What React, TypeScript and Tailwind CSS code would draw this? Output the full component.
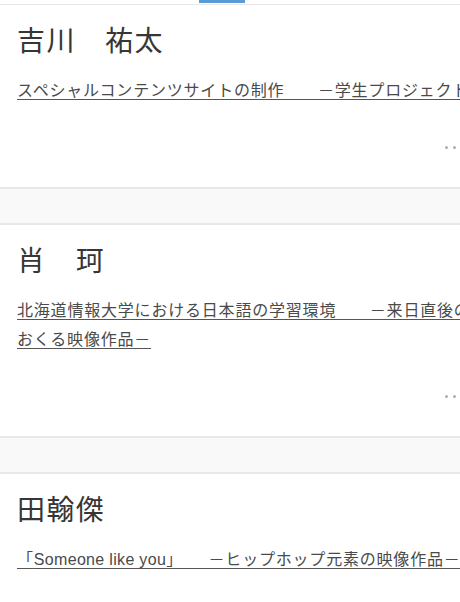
import type { ReactNode } from "react";

const works: { name: string; lines: ReactNode[] }[] = [
  {
    name: "吉川　祐太",
    lines: ["スペシャルコンテンツサイトの制作　　－学生プロジェクト－"],
  },
  {
    name: "肖　珂",
    lines: [
      "北海道情報大学における日本語の学習環境　　－来日直後の人に",
      "おくる映像作品－",
    ],
  },
  {
    name: "田翰傑",
    lines: [
      <>
        「<span className="tracking-[0.02em]">Someone like you</span>」　　－ヒップホップ元素の映像作品－
      </>,
    ],
  },
];

function MoreDots() {
  return (
    <div className="flex justify-end gap-[5px] pr-[46px] mt-[41px]">
      <span className="block w-[3px] h-[3px] rounded-full bg-[#aeaeae]" />
      <span className="block w-[3px] h-[3px] rounded-full bg-[#aeaeae]" />
      <span className="block w-[3px] h-[3px] rounded-full bg-[#aeaeae]" />
    </div>
  );
}

function WorkCard({ name, lines, last }: { name: string; lines: ReactNode[]; last?: boolean }) {
  return (
    <section className="pt-[17px] pb-[38px] pl-[17px]">
      <h2 className="h-[40px] leading-[40px] text-[28px] font-normal tracking-[0.05em] text-[#363636] whitespace-nowrap">
        {name}
      </h2>
      <a
        href="#"
        className="block mt-[14px] text-[16px] leading-[29px] tracking-[0.05em] text-[#4a4a4a] underline underline-offset-[3px] decoration-[#555] whitespace-nowrap"
      >
        {lines.map((l, i) => (
          <span key={i} className="block w-fit">
            {l}
          </span>
        ))}
      </a>
      {!last && <MoreDots />}
    </section>
  );
}

export default function App() {
  return (
    <div
      className="w-full min-h-screen overflow-hidden bg-white"
      style={{ fontFamily: '"Liberation Sans", "Noto Sans CJK JP", sans-serif' }}
    >
      <div className="w-[510px]">
        {/* tab bar remnant */}
        <div className="h-[5px] border-b border-[#e6e6e6]">
          <div className="ml-[199px] w-[46px] h-[3px] bg-[#5b9bd3]" />
        </div>

        {works.map((w, i) => (
          <div key={w.name}>
            <WorkCard name={w.name} lines={w.lines} last={i === works.length - 1} />
            {i < works.length - 1 && (
              <div className="h-[38px] bg-[#f9f9f9] border-y-2 border-[#e8e8e8]" />
            )}
          </div>
        ))}
      </div>
    </div>
  );
}
